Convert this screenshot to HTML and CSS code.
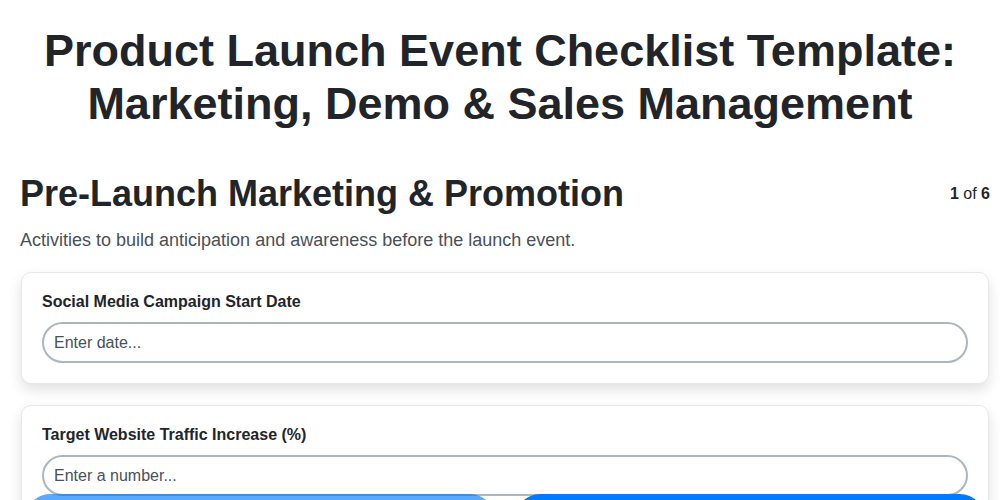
FILE: index.html
```html
<!DOCTYPE html>
<html lang="en">
<head>
<meta charset="utf-8">
<title>Product Launch Event Checklist Template</title>
<link rel="stylesheet" href="styles.css">
</head>
<body>
<div class="page">
  <h1 class="title">Product Launch Event Checklist Template: Marketing, Demo &amp; Sales Management</h1>
  <section class="step">
    <div class="step-head">
      <h2 class="step-title">Pre-Launch Marketing &amp; Promotion</h2>
      <div class="step-count"><b>1</b> of <b>6</b></div>
    </div>
    <p class="step-desc">Activities to build anticipation and awareness before the launch event.</p>
    <div class="card">
      <label class="field-label" for="f1">Social Media Campaign Start Date</label>
      <input class="field-input" id="f1" type="text" placeholder="Enter date...">
    </div>
    <div class="card">
      <label class="field-label" for="f2">Target Website Traffic Increase (%)</label>
      <input class="field-input" id="f2" type="text" placeholder="Enter a number...">
    </div>
    <div class="card">
      <label class="field-label" for="f3">Press Release Distribution Date</label>
      <input class="field-input" id="f3" type="text" placeholder="Enter date...">
    </div>
  </section>
</div>
<nav class="nav">
  <button class="btn btn-prev" disabled>Previous</button>
  <button class="btn btn-next">Next</button>
</nav>
</body>
</html>
```
FILE: styles.css
```css
* { box-sizing: border-box; }
html, body { margin: 0; padding: 0; background: #ffffff; }
body {
  font-family: "Liberation Sans", Arial, sans-serif;
  color: #212529;
}
.page {
  padding: 24px 0 80px;
}
.title {
  margin: 0 0 41px;
  text-align: center;
  font-size: 45px;
  line-height: 53px;
  font-weight: 700;
  color: #212529;
}
.step {
  padding: 0 10px 0 20px;
}
.step-head {
  display: flex;
  justify-content: space-between;
  align-items: center;
}
.step-title {
  margin: 0;
  font-size: 36px;
  line-height: 46px;
  font-weight: 700;
}
.step-count {
  font-size: 16px;
  color: #212529;
}
.step-desc {
  margin: 11px 0 20px;
  font-size: 18px;
  line-height: 24px;
  color: #495057;
}
.card {
  margin: 0 1px 21px 1px;
  padding: 20px 20px 20px 20px;
  background: #fff;
  border: 1px solid #e6e7eb;
  border-radius: 10px;
  box-shadow: 0 6px 14px rgba(0, 0, 0, 0.12);
}
.field-label {
  display: block;
  font-size: 16px;
  font-weight: 700;
  line-height: 18px;
  margin-bottom: 11px;
  color: #212529;
}
.field-input {
  display: block;
  width: 100%;
  height: 41px;
  padding: 0 10px;
  border: 2px solid #adb5bd;
  border-radius: 21px;
  font-family: "Liberation Sans", Arial, sans-serif;
  font-size: 16px;
  color: #212529;
  background: #fff;
  outline: none;
}
.field-input::placeholder { color: #495057; }
.nav {
  position: fixed;
  top: 494px;
  left: 0;
  right: 0;
  display: grid;
  grid-template-columns: 1fr 1fr;
  gap: 20px;
  padding: 0 15px 0 25px;
}
.btn {
  height: 50px;
  border: none;
  border-radius: 25px;
  background: #007bff;
  color: #fff;
  font-family: "Liberation Sans", Arial, sans-serif;
  font-size: 16px;
  font-weight: 700;
}
.btn-prev { opacity: 0.65; }
```
